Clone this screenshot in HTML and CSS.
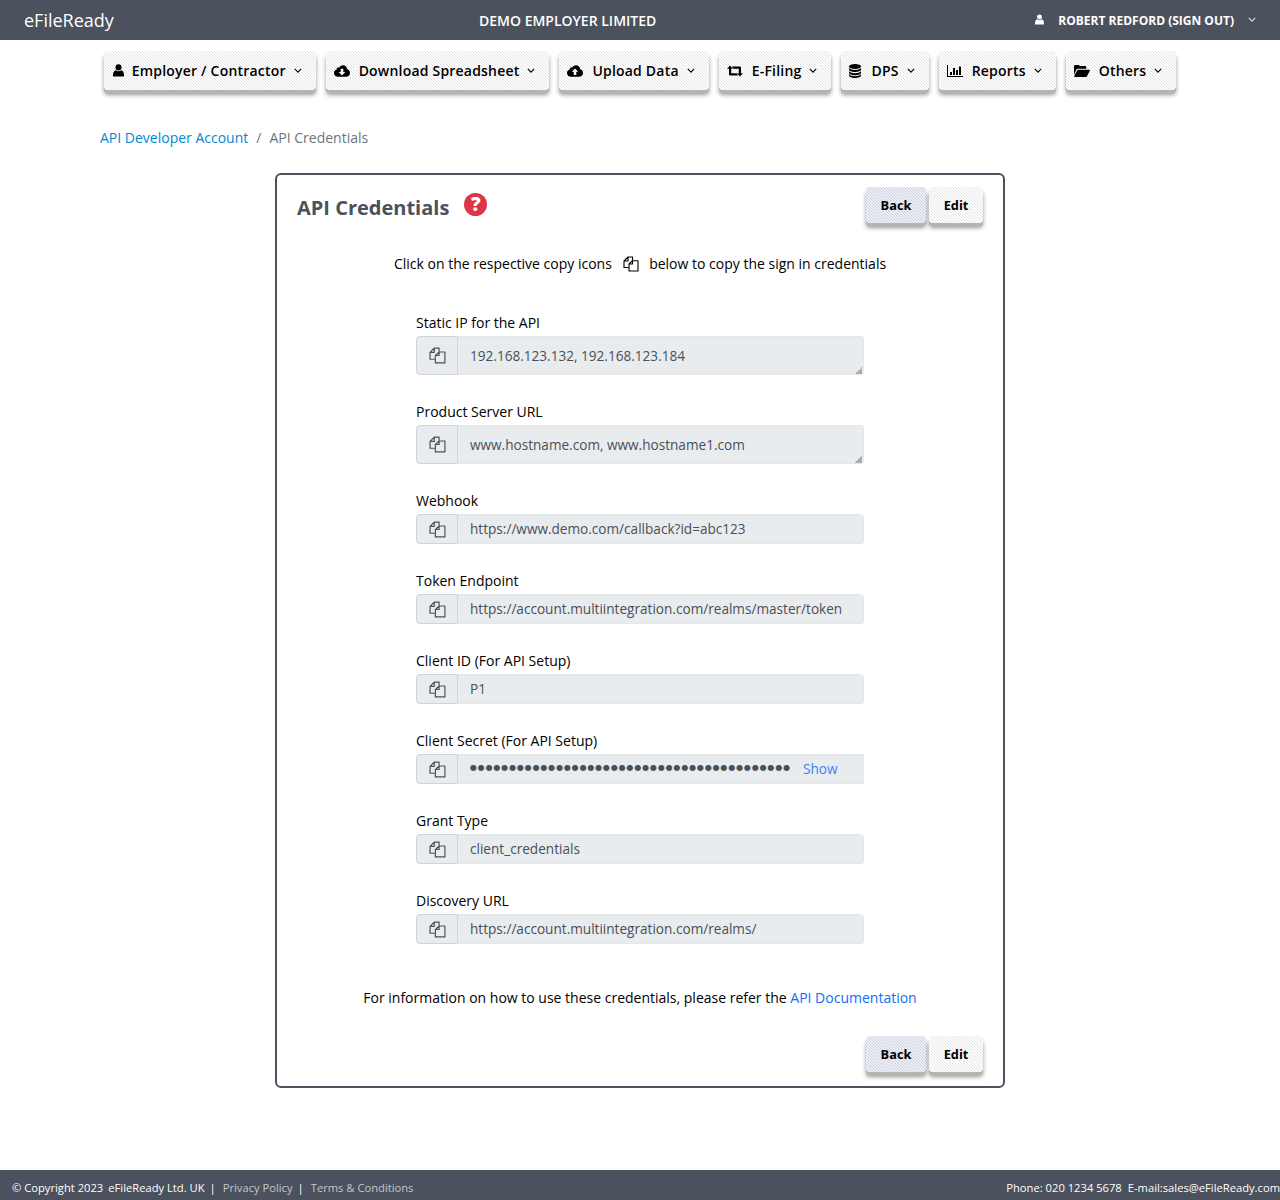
FILE: index.html
```html
<!DOCTYPE html>
<html lang="en">
<head>
<meta charset="utf-8">
<title>API Credentials</title>
<link rel="stylesheet" href="styles.css">
</head>
<body>
<svg class="defs" width="0" height="0" aria-hidden="true">
  <symbol id="i-copy" viewBox="0 0 16 16">
    <path d="M5.500 11.500H1V5L5 1H9.500V4.500M5 1V5H1" fill="none" stroke="currentColor" stroke-width="1.100" stroke-linejoin="round"/>
    <path d="M9.500 4.700L6 8V15H15V4.700ZM9.500 4.700V8H6" fill="none" stroke="currentColor" stroke-width="1.100" stroke-linejoin="round"/>
  </symbol>
  <symbol id="i-chev" viewBox="0 0 10 6">
    <path d="M1 1L5 5L9 1" fill="none" stroke="currentColor" stroke-width="1.4"/>
  </symbol>
  <symbol id="i-user" viewBox="0 0 12 14">
    <circle cx="6" cy="3.6" r="3.3" fill="currentColor"/>
    <path d="M0.6 13.6C0 13.6 0 13 0 12.4C0 9.5 1 7.4 2.8 6.8C3.7 7.5 4.8 7.9 6 7.9S8.300 7.500 9.200 6.800C11 7.400 12 9.500 12 12.400C12 13 12 13.600 11.400 13.600Z" fill="currentColor"/>
  </symbol>
  <symbol id="i-cloud-down" viewBox="0 0 16 12">
    <path d="M4 11.800C1.800 11.800 0 10.200 0 8.100C0 6.400 1 5.100 2.600 4.600C2.800 3.100 4 2.200 5.300 2.400C6.200 1 7.500 0.200 9 0.200C11.300 0.200 13.100 2 13.200 4.300C14.900 4.800 16 6.200 16 8C16 10.100 14.300 11.800 12 11.800ZM8 10.400L11.300 7H9.300V3.700H6.700V7H4.700Z" fill="currentColor" fill-rule="evenodd"/>
  </symbol>
  <symbol id="i-cloud-up" viewBox="0 0 16 12">
    <path d="M4 11.800C1.800 11.800 0 10.200 0 8.100C0 6.400 1 5.100 2.600 4.600C2.800 3.100 4 2.200 5.300 2.400C6.200 1 7.500 0.200 9 0.200C11.300 0.200 13.100 2 13.200 4.300C14.900 4.800 16 6.200 16 8C16 10.100 14.300 11.800 12 11.800ZM8 3.400L4.700 6.800H6.700V10.100H9.300V6.800H11.300Z" fill="currentColor" fill-rule="evenodd"/>
  </symbol>
  <symbol id="i-retweet" viewBox="0 0 16 11">
    <path d="M3 0L6 3.300H4.200V7.800H9.500L11.200 10H2.900C2.300 10 2 9.700 2 9.100V3.300H0Z M13 11L10 7.700H11.800V3.200H6.500L4.800 1H13.100C13.700 1 14 1.300 14 1.900V7.700H16Z" fill="currentColor"/>
  </symbol>
  <symbol id="i-db" viewBox="0 0 12 14">
    <ellipse cx="6" cy="2.500" rx="6" ry="2.500" fill="currentColor"/>
    <path d="M0 4V5.500C0 6.900 2.700 8 6 8S12 6.900 12 5.500V4C11 5.300 8.700 6 6 6S1 5.300 0 4Z M0 7.200V8.700C0 10.100 2.700 11.200 6 11.200S12 10.100 12 8.700V7.200C11 8.500 8.700 9.200 6 9.200S1 8.500 0 7.200Z M0 10.300V11.500C0 12.900 2.700 14 6 14S12 12.900 12 11.500V10.300C11 11.600 8.700 12.300 6 12.300S1 11.600 0 10.300Z" fill="currentColor"/>
  </symbol>
  <symbol id="i-chart" viewBox="0 0 16 12">
    <path d="M0 0H1V11H16V12H0Z M3 7H5V10H3Z M6 3H8V10H6Z M9 5H11V10H9Z M12 1.500H14V10H12Z" fill="currentColor"/>
  </symbol>
  <symbol id="i-folder" viewBox="0 0 16 12">
    <path d="M0 10V1.500C0 0.700 0.600 0 1.400 0H4.500C5.200 0 5.600 0.500 5.800 1.100H11C11.800 1.100 12.300 1.700 12.300 2.500V3.700H4C3.200 3.700 2.600 4.100 2.200 4.800Z M0.800 12C0.200 12 0 11.600 0.300 11.100L3 5.600C3.300 5 3.800 4.800 4.300 4.800H15.200C15.800 4.800 16.100 5.200 15.800 5.700L13 11.200C12.700 11.800 12.200 12 11.700 12Z" fill="currentColor"/>
  </symbol>
</svg>

<header class="topbar">
  <a class="brand">eFileReady</a>
  <div class="employer">DEMO EMPLOYER LIMITED</div>
  <div class="account">
    <svg class="account-icon"><use href="#i-user"/></svg>
    <span class="account-name">ROBERT REDFORD (SIGN OUT)</span>
    <svg class="account-chev"><use href="#i-chev"/></svg>
  </div>
</header>

<nav class="menu">
  <a class="menu-btn"><svg class="mi mi-user"><use href="#i-user"/></svg><span>Employer / Contractor</span><svg class="chev"><use href="#i-chev"/></svg></a>
  <a class="menu-btn"><svg class="mi mi-wide"><use href="#i-cloud-down"/></svg><span>Download Spreadsheet</span><svg class="chev"><use href="#i-chev"/></svg></a>
  <a class="menu-btn"><svg class="mi mi-wide"><use href="#i-cloud-up"/></svg><span>Upload Data</span><svg class="chev"><use href="#i-chev"/></svg></a>
  <a class="menu-btn"><svg class="mi mi-wide"><use href="#i-retweet"/></svg><span>E-Filing</span><svg class="chev"><use href="#i-chev"/></svg></a>
  <a class="menu-btn"><svg class="mi mi-db"><use href="#i-db"/></svg><span>DPS</span><svg class="chev"><use href="#i-chev"/></svg></a>
  <a class="menu-btn"><svg class="mi mi-wide"><use href="#i-chart"/></svg><span>Reports</span><svg class="chev"><use href="#i-chev"/></svg></a>
  <a class="menu-btn"><svg class="mi mi-wide"><use href="#i-folder"/></svg><span>Others</span><svg class="chev"><use href="#i-chev"/></svg></a>
</nav>

<main class="content">
  <div class="crumbs"><a class="crumb-link">API Developer Account</a><span class="crumb-sep">/</span><span class="crumb-current">API Credentials</span></div>

  <section class="card">
    <div class="card-head">
      <h1 class="title">API Credentials</h1>
      <span class="help">?</span>
      <div class="actions">
        <a class="btn btn-back">Back</a>
        <a class="btn btn-edit">Edit</a>
      </div>
    </div>

    <p class="intro">Click on the respective copy icons <svg class="intro-icon"><use href="#i-copy"/></svg> below to copy the sign in credentials</p>

    <div class="fields">
      <div class="field field-tall">
        <label class="label">Static IP for the API</label>
        <div class="group">
          <span class="addon"><svg class="copy"><use href="#i-copy"/></svg></span>
          <div class="area-wrap"><textarea class="control control-area" readonly>192.168.123.132, 192.168.123.184</textarea></div>
        </div>
      </div>
      <div class="field field-tall">
        <label class="label">Product Server URL</label>
        <div class="group">
          <span class="addon"><svg class="copy"><use href="#i-copy"/></svg></span>
          <div class="area-wrap"><textarea class="control control-area" readonly>www.hostname.com, www.hostname1.com</textarea></div>
        </div>
      </div>
      <div class="field">
        <label class="label">Webhook</label>
        <div class="group">
          <span class="addon"><svg class="copy"><use href="#i-copy"/></svg></span>
          <div class="control">https://www.demo.com/callback?id=abc123</div>
        </div>
      </div>
      <div class="field">
        <label class="label">Token Endpoint</label>
        <div class="group">
          <span class="addon"><svg class="copy"><use href="#i-copy"/></svg></span>
          <div class="control">https://account.multiintegration.com/realms/master/token</div>
        </div>
      </div>
      <div class="field">
        <label class="label">Client ID (For API Setup)</label>
        <div class="group">
          <span class="addon"><svg class="copy"><use href="#i-copy"/></svg></span>
          <div class="control">P1</div>
        </div>
      </div>
      <div class="field">
        <label class="label">Client Secret (For API Setup)</label>
        <div class="group">
          <span class="addon"><svg class="copy"><use href="#i-copy"/></svg></span>
          <div class="control control-secret"><span class="dots">●●●●●●●●●●●●●●●●●●●●●●●●●●●●●●●●●●●●●●●●●</span><a class="show">Show</a></div>
        </div>
      </div>
      <div class="field">
        <label class="label">Grant Type</label>
        <div class="group">
          <span class="addon"><svg class="copy"><use href="#i-copy"/></svg></span>
          <div class="control">client_credentials</div>
        </div>
      </div>
      <div class="field">
        <label class="label">Discovery URL</label>
        <div class="group">
          <span class="addon"><svg class="copy"><use href="#i-copy"/></svg></span>
          <div class="control">https://account.multiintegration.com/realms/</div>
        </div>
      </div>
    </div>

    <p class="docs">For information on how to use these credentials, please refer the <a class="docs-link">API Documentation</a></p>

    <div class="card-foot">
      <a class="btn btn-back">Back</a>
      <a class="btn btn-edit">Edit</a>
    </div>
  </section>
</main>

<footer class="footer">
  <div class="foot-left">
    <span>© Copyright 2023</span><span>eFileReady Ltd. UK</span><span class="foot-sep">|</span><a class="foot-link">Privacy Policy</a><span class="foot-sep">|</span><a class="foot-link">Terms &amp; Conditions</a>
  </div>
  <div class="foot-right"><span>Phone: 020 1234 5678</span><span>E-mail:sales@eFileReady.com</span></div>
</footer>
</body>
</html>
```
FILE: styles.css
```css
* { box-sizing: border-box; }
html, body { margin: 0; padding: 0; }
body {
  min-height: 100vh;
  display: flex;
  flex-direction: column;
  font-family: "Open Sans", sans-serif;
  font-size: 14px;
  color: #000;
  background: #fff;
}
.defs { position: absolute; }

.topbar {
  height: 40px;
  flex: none;
  display: flex;
  align-items: center;
  background: #4b515d;
  color: #fff;
  padding: 0 24px 0 24px;
}
.brand { font-size: 18px; width: 455px; }
.employer { font-size: 14px; font-weight: 600; flex: 1; }
.account { display: flex; align-items: center; font-size: 12px; font-weight: 700; }
.account-icon { width: 9px; height: 11px; margin-right: 14px; margin-top: -2px; }
.account-name { margin-right: 14px; }
.account-chev { width: 8px; height: 5px; color: #ddd; margin-top: -2px; }

.menu {
  flex: none;
  display: flex;
  justify-content: center;
  gap: 10px;
  margin-top: 11px;
}
.menu-btn {
  height: 39px;
  display: flex;
  align-items: center;
  padding: 0 14px 0 8px;
  border-radius: 4px;
  font-size: 14px;
  font-weight: 600;
  letter-spacing: 0.2px;
  color: #000;
  background: repeating-linear-gradient(45deg, #fff 0 1px, #e2e2e2 1px 2.12px);
  box-shadow: 0 3px 0 #b4b4b4, 0 5px 4px rgba(0, 0, 0, 0.4);
}
.mi { margin-right: 9px; color: #000; }
.mi-user { width: 11px; height: 13px; margin-left: 1px; margin-right: 8px; }
.mi-db { width: 12px; height: 14px; margin-right: 10px; }
.mi-wide { width: 16px; height: 12px; }
.chev { width: 8px; height: 5px; margin-left: 8px; }

.content { flex: 1; padding: 0 100px; }
.crumbs { margin-top: 38px; line-height: 20px; }
.crumb-link { color: #0288d1; }
.crumb-sep { color: #6c757d; margin: 0 8px; }
.crumb-current { color: #6c757d; }

.card {
  width: 730px;
  height: 915px;
  margin: 25px auto 0;
  border: 2px solid #4b515d;
  border-radius: 6px;
  padding: 12px 20px 0;
}
.card-head { display: flex; align-items: flex-start; height: 40px; }
.title {
  margin: 7px 0 0;
  font-size: 20px;
  line-height: 27px;
  font-weight: 700;
  color: #4b515d;
}
.help {
  width: 23px;
  height: 23px;
  margin: 6px 0 0 15px;
  border-radius: 50%;
  background: #dc3545;
  color: #fff;
  font-size: 19px;
  font-weight: 800;
  line-height: 23px;
  text-align: center;
}
.actions { margin-left: auto; display: flex; gap: 3px; }
.btn {
  height: 36px;
  display: flex;
  align-items: center;
  justify-content: center;
  border-radius: 4px;
  font-size: 12.8px;
  font-weight: 700;
  color: #000;
  box-shadow: 0 3px 0 #b4b4b4, 0 5px 4px rgba(0, 0, 0, 0.4);
}
.btn-back {
  width: 60px;
  background: repeating-linear-gradient(45deg, #eef0f6 0 1px, #c9cfdf 1px 2.12px);
}
.btn-edit {
  width: 54px;
  background: repeating-linear-gradient(45deg, #fff 0 1px, #e2e2e2 1px 2.12px);
}
.intro {
  margin: 26px 0 0;
  line-height: 22px;
  text-align: center;
  font-size: 14px;
}
.intro-icon { width: 16px; height: 16px; vertical-align: -3px; margin: 0 7px; }

.fields { width: 448px; margin: 38px auto 0; display: flex; flex-direction: column; }
.field { display: flex; flex-direction: column; height: 80px; }
.field-tall { height: 89px; }
.label { line-height: 20px; margin-bottom: 3px; font-size: 14px; }
.group { display: flex; width: 448px; }
.addon {
  flex: none;
  width: 42px;
  height: 30px;
  display: flex;
  align-items: center;
  justify-content: center;
  background: #e9ecef;
  border: 1px solid #ced4da;
  border-radius: 4px 0 0 4px;
  color: #495057;
}
.field-tall .addon { height: 39px; }
.copy { width: 17px; height: 17px; }
.control {
  flex: 1;
  min-width: 0;
  height: 30px;
  display: flex;
  align-items: center;
  padding: 0 12px 2px;
  background: #e9ecef;
  border: 1px solid #e4e7ea;
  border-left: 0;
  border-radius: 0 4px 4px 0;
  font-family: inherit;
  font-size: 13.6px;
  color: #495057;
}
.area-wrap { flex: 1; min-width: 0; position: relative; display: flex; }
.area-wrap::after {
  content: "";
  position: absolute;
  right: 2px;
  bottom: 1px;
  width: 7px;
  height: 7px;
  background: linear-gradient(135deg, transparent 50%, #a9adb1 50%);
}
.control-area {
  display: block;
  width: 100%;
  height: 39px;
  padding: 8px 12px 0;
  line-height: 21px;
  outline: 0;
  overflow: hidden;
  resize: none;
}
.control-secret { border-radius: 0; border-right: 0; }
.dots { font-family: "DejaVu Sans", sans-serif; font-size: 8px; letter-spacing: 0.85px; line-height: 1; color: #495057; }
.show { margin-left: 12px; color: #3b82f6; }

.docs { margin: 17px 0 0; text-align: center; line-height: 20px; }
.docs-link { color: #0d6efd; }
.card-foot { display: flex; justify-content: flex-end; gap: 3px; margin-top: 28px; }

.footer {
  flex: none;
  height: 30px;
  display: flex;
  align-items: center;
  justify-content: space-between;
  background: #4b515d;
  color: #fff;
  font-size: 11.2px;
  padding: 4px 0 0 12px;
}
.foot-left { display: flex; gap: 5px; }
.foot-sep { margin-right: 2px; }
.foot-link { color: #c4c7cc; }
.foot-right { display: flex; gap: 6px; }
```
